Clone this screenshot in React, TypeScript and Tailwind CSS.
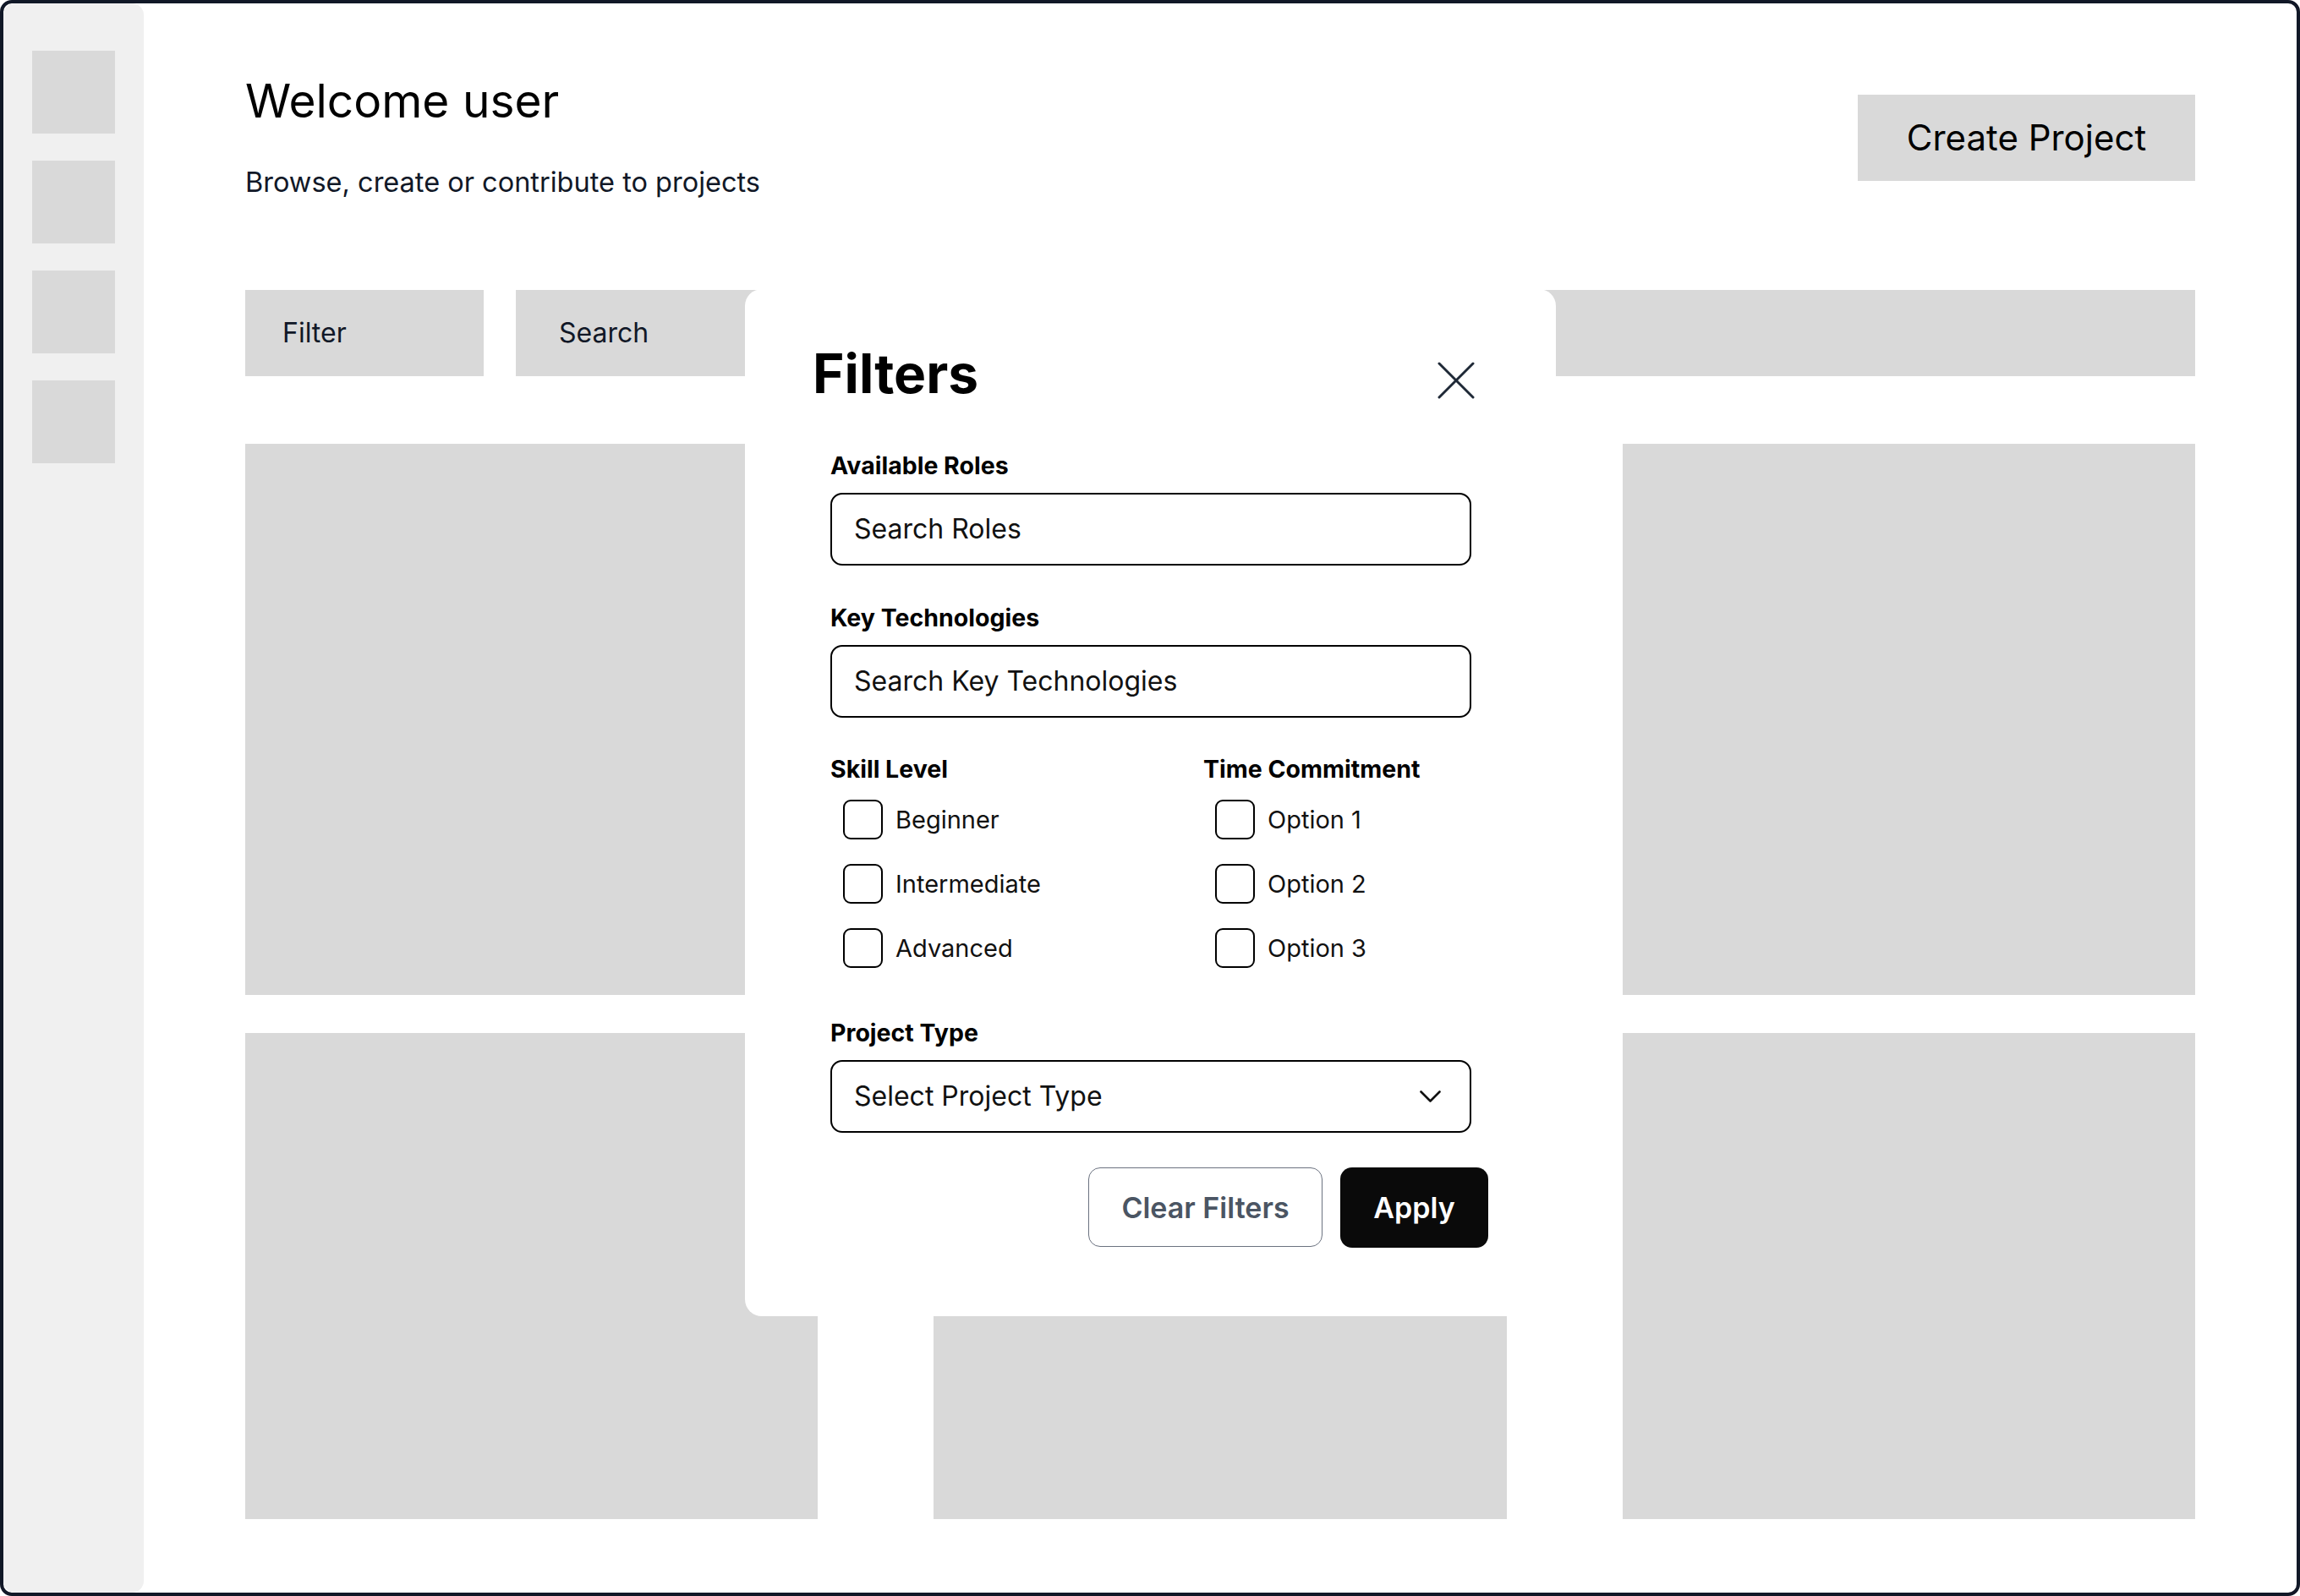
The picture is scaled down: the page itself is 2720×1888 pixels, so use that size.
import React from "react";

const font = { fontFamily: "Inter, 'Noto Sans', sans-serif" };

function Checkbox({ label }: { label: string }) {
  return (
    <div className="flex items-center gap-[15px]">
      <div className="w-[47px] h-[47px] border-2 border-black rounded-[9px] bg-white" />
      <span className="text-[29px] leading-none text-[#111]">{label}</span>
    </div>
  );
}

export default function App() {
  return (
    <div
      className="relative w-[2720px] h-[1888px] border-4 border-[#111827] rounded-[14px] bg-white flex overflow-hidden"
      style={font}
    >
      {/* Sidebar */}
      <aside className="w-[166px] shrink-0 bg-[#f0f0f0] rounded-[14px] flex flex-col items-center gap-[32px] pt-[56px]">
        <div className="w-[98px] h-[98px] bg-[#d9d9d9]" />
        <div className="w-[98px] h-[98px] bg-[#d9d9d9]" />
        <div className="w-[98px] h-[98px] bg-[#d9d9d9]" />
        <div className="w-[98px] h-[98px] bg-[#d9d9d9]" />
      </aside>

      {/* Main */}
      <main className="flex-1 px-[120px] pt-[88px] flex flex-col">
        <header className="flex justify-between items-start">
          <div>
            <h1 className="text-[55px] leading-none text-black font-normal">Welcome user</h1>
            <p className="mt-[53px] text-[32.5px] leading-none text-[#111827]">
              Browse, create or contribute to projects
            </p>
          </div>
          <button className="mt-[20px] w-[399px] h-[102px] bg-[#d9d9d9] text-[42px] leading-none text-black flex items-center justify-center">
            Create Project
          </button>
        </header>

        <div className="mt-[110px] flex gap-[38px] h-[102px]">
          <div className="w-[282px] bg-[#d9d9d9] flex items-center pl-[44px] text-[32px] text-[#111827]">
            Filter
          </div>
          <div className="flex-1 bg-[#d9d9d9] flex items-center pl-[51px] text-[32px] text-[#111827]">
            Search
          </div>
        </div>

        <div className="mt-[80px] grid grid-cols-3 grid-rows-[652px_575px] gap-x-[137px] gap-y-[45px]">
          <div className="bg-[#d9d9d9]" />
          <div className="bg-[#d9d9d9]" />
          <div className="bg-[#d9d9d9]" />
          <div className="bg-[#d9d9d9]" />
          <div className="bg-[#d9d9d9]" />
          <div className="bg-[#d9d9d9]" />
        </div>
      </main>

      {/* Filters modal */}
      <div className="absolute left-[877px] top-[338px] w-[959px] bg-white rounded-[20px] px-[80px] pt-[68px] pb-[81px]">
        <div className="flex justify-between items-start">
          <h2 className="text-[64px] leading-none font-bold text-black">Filters</h2>
          <svg
            className="mt-[18px] mr-[16px]"
            width="44"
            height="44"
            viewBox="0 0 44 44"
            fill="none"
            stroke="#1f2937"
            strokeWidth="3"
            strokeLinecap="round"
          >
            <line x1="2" y1="2" x2="42" y2="42" />
            <line x1="42" y1="2" x2="2" y2="42" />
          </svg>
        </div>

        <div className="pl-[21px] pr-[20px]">
          <label className="block mt-[61px] text-[28.5px] leading-[32px] font-bold text-black">
            Available Roles
          </label>
          <div className="mt-[16px] h-[86px] border-2 border-black rounded-[14px] flex items-center px-[26px] text-[32px] text-[#111]">
            Search Roles
          </div>

          <label className="block mt-[46px] text-[28.5px] leading-[32px] font-bold text-black">
            Key Technologies
          </label>
          <div className="mt-[16px] h-[86px] border-2 border-black rounded-[14px] flex items-center px-[26px] text-[32px] text-[#111]">
            Search Key Technologies
          </div>

          <div className="mt-[45px] flex">
            <div className="w-[441px]">
              <div className="text-[28.5px] leading-[32px] font-bold text-black">Skill Level</div>
              <div className="mt-[20px] pl-[15px] flex flex-col gap-[29px]">
                <Checkbox label="Beginner" />
                <Checkbox label="Intermediate" />
                <Checkbox label="Advanced" />
              </div>
            </div>
            <div>
              <div className="text-[28.5px] leading-[32px] font-bold text-black">Time Commitment</div>
              <div className="mt-[20px] pl-[14px] flex flex-col gap-[29px]">
                <Checkbox label="Option 1" />
                <Checkbox label="Option 2" />
                <Checkbox label="Option 3" />
              </div>
            </div>
          </div>

          <label className="block mt-[61px] text-[28.5px] leading-[32px] font-bold text-black">
            Project Type
          </label>
          <div className="mt-[16px] h-[86px] border-2 border-black rounded-[14px] flex items-center justify-between pl-[26px] pr-[34px] text-[32px] text-[#111]">
            <span>Select Project Type</span>
            <svg width="25" height="14" viewBox="0 0 25 14" fill="none" stroke="#111" strokeWidth="2.6" strokeLinecap="round" strokeLinejoin="round">
              <polyline points="1.5,1.5 12.5,12.5 23.5,1.5" />
            </svg>
          </div>
        </div>

        <div className="mt-[41px] flex justify-end gap-[21px]">
          <button className="w-[277px] h-[94px] border-[1.5px] border-[#6b7280] rounded-[14px] text-[34px] font-semibold text-[#4b5563] flex items-center justify-center">
            Clear Filters
          </button>
          <button className="w-[175px] h-[95px] bg-[#0a0a0a] rounded-[14px] text-[34px] font-semibold text-white flex items-center justify-center">
            Apply
          </button>
        </div>
      </div>
    </div>
  );
}
